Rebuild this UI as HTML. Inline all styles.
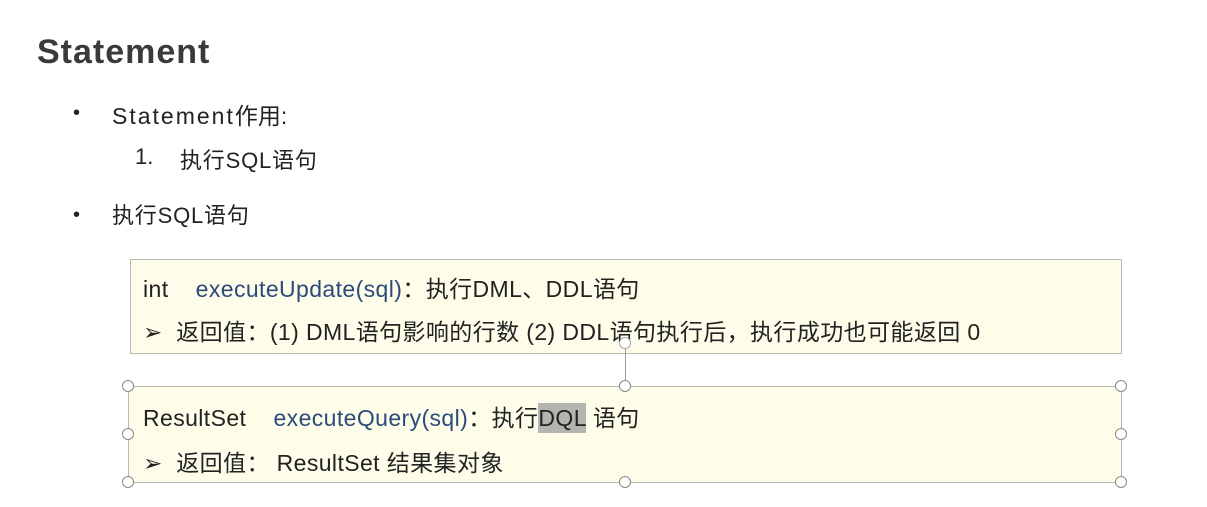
<!DOCTYPE html>
<html><head><meta charset="utf-8"><style>
body{margin:0;width:1207px;height:507px;background:#fff;position:relative;overflow:hidden;font-family:"Liberation Sans","Noto Sans CJK SC",sans-serif;color:#222}
.a{position:absolute;white-space:nowrap}
.box{position:absolute;background:#fdfde9;border:1.5px solid #b8b8b0}
.h{position:absolute;width:10px;height:10px;border:1.5px solid #888;border-radius:50%;background:#fff}
.b{color:#2c4a7c}
.t{font-size:23px;line-height:28px;letter-spacing:0.4px}
</style></head><body>
<div class="a" style="left:37px;top:33px;font-size:34px;font-weight:bold;color:#3a3a3a;letter-spacing:1px">Statement</div>
<div class="a" style="left:73px;top:102px;font-size:20px">•</div>
<div class="a" style="left:112px;top:97px;font-size:23px"><span style="letter-spacing:2px">Statement</span>作用:</div>
<div class="a" style="left:135px;top:144px;font-size:22px">1.</div>
<div class="a" style="left:180px;top:143px;font-size:22px;letter-spacing:0.8px">执行SQL语句</div>
<div class="a" style="left:73px;top:204px;font-size:20px">•</div>
<div class="a" style="left:112px;top:198px;font-size:22px;letter-spacing:0.8px">执行SQL语句</div>

<div class="box" style="left:130px;top:259px;width:990px;height:93px"></div>
<div class="a t" style="left:143px;top:275px">int&nbsp;&nbsp;&nbsp; <span class="b">executeUpdate(sql)</span>：执行DML、DDL语句</div>
<div class="a t" style="left:143px;top:318px">➢&nbsp; 返回值：(1) DML语句影响的行数 (2) DDL语句执行后，执行成功也可能返回 0</div>

<div style="position:absolute;left:625px;top:345px;width:1px;height:41px;background:#999"></div>
<div class="h" style="left:619px;top:337px;border-color:#aaa"></div>

<div class="box" style="left:128px;top:386px;width:992px;height:95px"></div>
<div class="a t" style="left:143px;top:404px">ResultSet&nbsp;&nbsp;&nbsp; <span class="b">executeQuery(sql)</span>：执行<span style="background:#b4b4b0;padding:2px 0">DQL</span> 语句</div>
<div class="a t" style="left:143px;top:449px">➢&nbsp; 返回值： ResultSet 结果集对象</div>

<div class="h" style="left:122px;top:380px"></div>
<div class="h" style="left:619px;top:380px"></div>
<div class="h" style="left:1115px;top:380px"></div>
<div class="h" style="left:122px;top:428px"></div>
<div class="h" style="left:1115px;top:428px"></div>
<div class="h" style="left:122px;top:476px"></div>
<div class="h" style="left:619px;top:476px"></div>
<div class="h" style="left:1115px;top:476px"></div>
</body></html>
